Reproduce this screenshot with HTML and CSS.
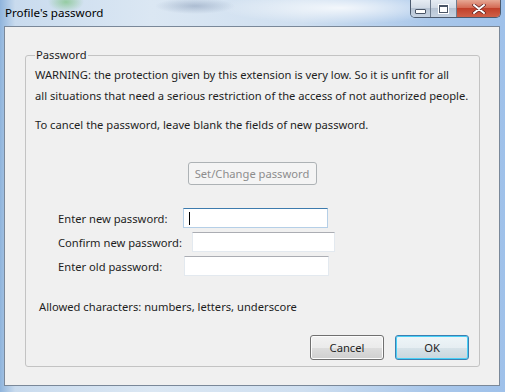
FILE: index.html
```html
<!DOCTYPE html>
<html lang="en">
<head>
  <meta charset="UTF-8" />
  <title>Profile's password</title>
  <link rel="stylesheet" href="styles.css">
</head>
<body>
  <div class="window">
    <!-- title bar -->
    <div class="titlebar">
      <span class="title">Profile's password</span>
      <div class="caption">
        <span class="cap-btn cap-min"><i class="min-glyph"></i></span>
        <span class="cap-btn cap-max"><i class="max-glyph"></i></span>
        <span class="cap-btn cap-close">
          <svg width="14" height="10" viewBox="0 0 14 10">
            <path d="M2 1 L12 9 M12 1 L2 9" stroke="#5a2020" stroke-width="3.4" stroke-linecap="round"/>
            <path d="M2 1 L12 9 M12 1 L2 9" stroke="#fff" stroke-width="2" stroke-linecap="round"/>
          </svg>
        </span>
      </div>
    </div>

    <div class="client">
      <fieldset class="group">
        <legend>Password</legend>
        <p class="warning">WARNING: the protection given by this extension is very low. So it is unfit for all<br>all situations that need a serious restriction of the access of not authorized people.</p>
        <p class="hint">To cancel the password, leave blank the fields of new password.</p>

        <div class="set-row">
          <button class="btn btn-disabled" disabled>Set/Change password</button>
        </div>

        <div class="fields">
          <div class="field">
            <label class="lbl-new">Enter new password:</label>
            <input type="password" class="focused">
          </div>
          <div class="field">
            <label class="lbl-confirm">Confirm new password:</label>
            <input type="password" class="in-confirm">
          </div>
          <div class="field">
            <label class="lbl-old">Enter old password:</label>
            <input type="password">
          </div>
        </div>

        <p class="allowed">Allowed characters: numbers, letters, underscore</p>

        <div class="actions">
          <button class="btn">Cancel</button>
          <button class="btn btn-default">OK</button>
        </div>
      </fieldset>
    </div>
  </div>
</body>
</html>
```

FILE: styles.css
```css
body {
  margin: 0;
  font-family: "Noto Sans", "Open Sans", sans-serif;
  font-size: 11.2px;
  color: #1e1e1e;
}
.window {
  width: 505px;
  height: 392px;
  box-sizing: border-box;
  padding: 0 5px 6px 4px;
  background:
    radial-gradient(ellipse 18px 10px at 66px 2px, rgba(110,190,110,0.6), transparent),
    radial-gradient(ellipse 40px 8px at 195px 6px, rgba(120,140,170,0.45), transparent),
    radial-gradient(ellipse 120px 16px at 340px 8px, rgba(255,255,255,0.8), transparent),
    linear-gradient(90deg, #8fb4dc 0, #c9dbee 3%, #dbe7f3 30%, #cfdff0 60%, #a9c7ea 85%, #9fc1ea 100%);
  display: flex;
  flex-direction: column;
}
.titlebar {
  height: 26px;
  display: flex;
  align-items: flex-start;
}
.title {
  margin: 5px 0 0 1px;
  line-height: 16px;
  color: #000;
  font-size: 11.6px;
}
.caption {
  margin-left: auto;
  display: flex;
  height: 17px;
  border: 1px solid #4b5a6e;
  border-top: none;
  border-radius: 0 0 5px 5px;
  overflow: hidden;
  position: relative;
  left: 1px;
}
.cap-btn {
  display: flex;
  align-items: center;
  justify-content: center;
}
.cap-min, .cap-max {
  width: 25px;
  background: linear-gradient(#e6ecf3 0, #d2dbe6 45%, #b7c4d4 50%, #c7d3e1 100%);
  border-right: 1px solid #6f7d8f;
}
.cap-min { width: 19px; }
.cap-close {
  width: 43px;
  background: linear-gradient(#e7a894 0, #d46b55 45%, #c1402a 50%, #cf6048 100%);
}
.min-glyph {
  width: 9px;
  height: 3px;
  margin-top: 5px;
  background: #fff;
  border: 1px solid #4a5566;
  border-radius: 1px;
}
.max-glyph {
  width: 7px;
  height: 5px;
  border: 1px solid #4a5566;
  border-top-width: 2px;
  background: #fff;
  outline: 1px solid #fff;
}
.client {
  flex: 1;
  background: #f0f0f0;
  border: 1px solid #7a8899;
  padding: 20px 19px 0 20px;
}
.group {
  margin: 0;
  padding: 1px 10px 6px 9px;
  border: 1px solid #c3c3c3;
  border-radius: 3px;
}
.group legend {
  padding: 0 1px;
  margin-left: 0;
  line-height: 16px;
}
p {
  margin: 0;
  line-height: 21px;
}
.hint {
  margin-top: 8px;
}
.set-row {
  margin-top: 27px;
  text-align: center;
}
.btn {
  font-family: inherit;
  font-size: 11.2px;
  color: #1e1e1e;
  height: 25px;
  width: 74px;
  padding: 0;
  border: 1px solid #707070;
  border-radius: 3px;
  background: linear-gradient(#f2f2f2 0, #ebebeb 50%, #dddddd 51%, #cfcfcf 100%);
  box-shadow: inset 0 0 0 1px #fcfcfc;
}
.btn-disabled {
  width: 129px;
  height: 23px;
  color: #8d8d8d;
  border-color: #adb2b5;
  background: #f4f4f4;
  box-shadow: none;
}
.btn-default {
  border-color: #3c7fb1;
  box-shadow: inset 0 0 0 1px #48d0f7;
  background: linear-gradient(#eef5f8 0, #e6eef2 50%, #d7e3e9 51%, #c9d6dd 100%);
}
.fields {
  margin-top: 23px;
  padding-left: 23px;
}
.field {
  display: flex;
  align-items: center;
  height: 20px;
  margin-bottom: 4px;
}
.field label { flex: none; }
.lbl-new { width: 125px; }
.lbl-confirm { width: 134px; }
.lbl-old { width: 126px; }
.field input {
  height: 20px;
  width: 145px;
  box-sizing: border-box;
  border: 1px solid #e3e9ef;
  border-top-color: #abadb3;
  background: #fff;
  padding: 0;
  margin: 0;
}
.field .in-confirm { width: 143px; }
.field .focused {
  border-color: #b5cfe7;
  border-top-color: #3d7bad;
  background: linear-gradient(#000, #000) no-repeat 5px 3px / 1px 13px, #fff;
}
.allowed {
  margin-top: 20px;
  padding-left: 4px;
}
.actions {
  margin-top: 18px;
  display: flex;
  justify-content: flex-end;
  gap: 11px;
}
```
